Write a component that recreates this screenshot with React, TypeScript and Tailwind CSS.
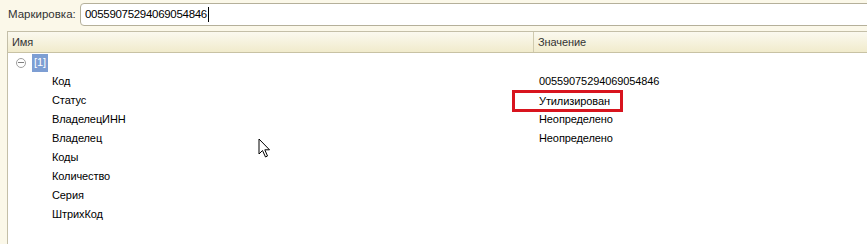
import React from "react";

const rows: { name: string; value?: string; marked?: boolean }[] = [
  { name: "Код", value: "00559075294069054846" },
  { name: "Статус", value: "Утилизирован", marked: true },
  { name: "ВладелецИНН", value: "Неопределено" },
  { name: "Владелец", value: "Неопределено" },
  { name: "Коды" },
  { name: "Количество" },
  { name: "Серия" },
  { name: "ШтрихКод" },
];

const Cursor: React.FC = () => (
  <svg width="14" height="22" viewBox="0 0 14 22" className="absolute left-[258px] top-[138px]">
    <path d="M1 1 L1 16 L4.5 12.5 L7.5 19 L9.5 18 L6.8 11.8 L11.5 11.8 Z" fill="#fff" stroke="#000" strokeWidth="1" />
  </svg>
);

const App: React.FC = () => {
  return (
    <div className="relative w-[867px] h-[244px] overflow-hidden bg-[#fbf8e9] font-['Liberation_Sans',Arial,sans-serif] text-[11px] tracking-[-0.1px] text-black">
      <div className="flex items-center h-[27px] pt-[2px]">
        <span className="ml-[8px] w-[72px] text-[11.5px] tracking-normal text-[#333]">Маркировка:</span>
        <div className="flex items-center h-[23px] flex-1 -mr-[10px] bg-white border border-[#b5b09a] rounded-[4px] pl-[4px] text-[11.5px] tracking-[-0.3px]">
          00559075294069054846
          <span className="ml-[1px] w-px h-[15px] bg-black" />
        </div>
      </div>
      <div className="ml-[7px] mt-[4px] h-[213px] border-l border-t border-[#c4bfa8] bg-white">
        <div className="flex h-[21px] border-b border-[#c8c2a4] bg-gradient-to-b from-[#fbf9ef] to-[#f1ebcc] text-[#333]">
          <div className="w-[526px] pl-[4px] flex items-center border-r border-[#d0caae]">Имя</div>
          <div className="flex-1 pl-[4px] flex items-center">Значение</div>
        </div>
        <div className="flex items-center h-[19px]">
          <span className="ml-[8px] w-[10px] h-[10px] rounded-full border border-[#a0a0a0] flex items-center justify-center">
            <span className="w-[6px] h-px bg-[#808080]" />
          </span>
          <span className="ml-[6px] px-[2px] h-[18px] flex items-center bg-[#7d9ed3] text-white">[1]</span>
        </div>
        {rows.map((r) => (
          <div key={r.name} className="flex items-center h-[19px]">
            <div className="w-[527px] pl-[44px]">{r.name}</div>
            <div className="flex-1 pl-[4px]">
              {r.value && (
                <span
                  className={
                    r.marked
                      ? "block w-fit -ml-[27px] pl-[24px] pr-[10px] h-[22px] leading-[16px] border-[3px] border-[#d8141e]"
                      : ""
                  }
                >
                  {r.value}
                </span>
              )}
            </div>
          </div>
        ))}
      </div>
      <Cursor />
    </div>
  );
};

export default App;
